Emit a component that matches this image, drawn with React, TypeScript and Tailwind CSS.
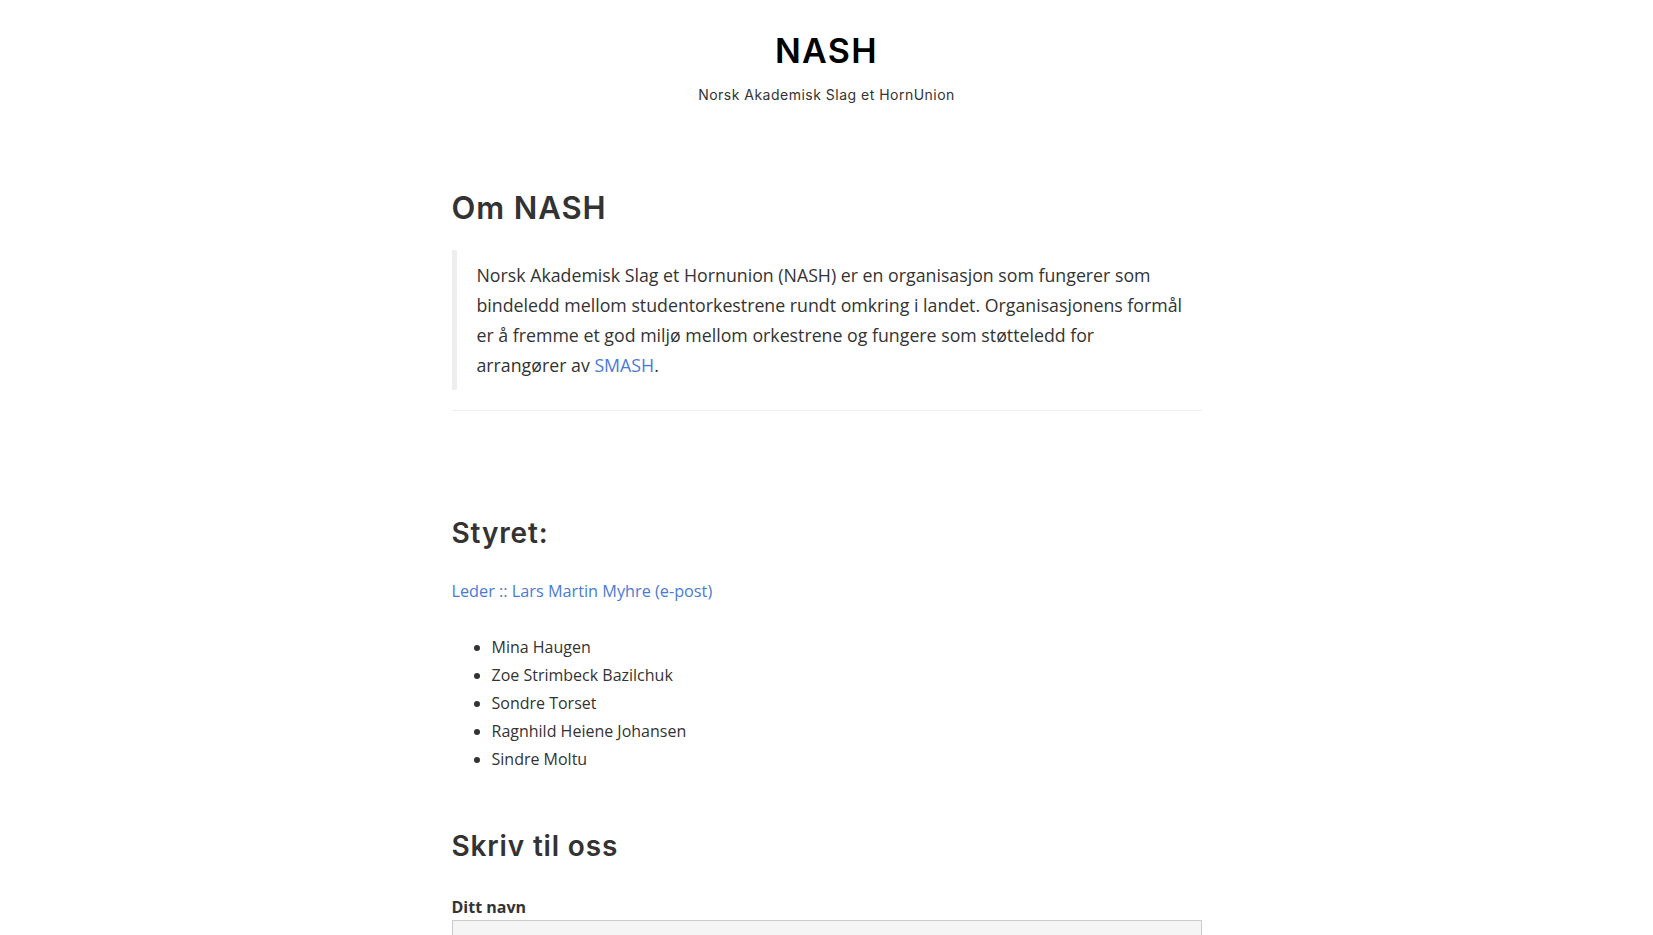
const heading = { fontFamily: 'Inter, "DejaVu Sans", sans-serif' };

const members = [
  'Mina Haugen',
  'Zoe Strimbeck Bazilchuk',
  'Sondre Torset',
  'Ragnhild Heiene Johansen',
  'Sindre Moltu',
];

export default function App() {
  return (
    <div
      className="min-h-[935px] bg-white text-[#333]"
      style={{ fontFamily: '"Open Sans", "Noto Sans", sans-serif' }}
    >
      {/* Header */}
      <header className="pt-[31px] text-center">
        <h1 className="text-[34px] leading-[40px] font-semibold tracking-[0.04em] text-black" style={heading}>
          NASH
        </h1>
        <p className="mt-[14px] text-[14px] leading-[20px] tracking-[0.035em] text-[#333]" style={heading}>
          Norsk Akademisk Slag et HornUnion
        </p>
      </header>

      <main className="mx-auto w-[750px] pt-[83px]">
        {/* Om NASH */}
        <h2 className="text-[31px] leading-[40px] font-semibold tracking-[0.03em]" style={heading}>
          Om NASH
        </h2>
        <blockquote className="mt-[22px] border-l-[5px] border-[#eee] py-[10px] pl-[20px] pr-[18px] text-[17.75px] leading-[30px]">
          Norsk Akademisk Slag et Hornunion (NASH) er en organisasjon som fungerer som
          bindeledd mellom studentorkestrene rundt omkring i landet. Organisasjonens formål
          er å fremme et god miljø mellom orkestrene og fungere som støtteledd for arrangører
          av <a className="text-[#4a7bd4]">SMASH</a>.
        </blockquote>
        <hr className="mt-[20px] border-t border-[#eee]" />

        {/* Styret */}
        <h3 className="mt-[104px] text-[28px] leading-[36px] font-semibold tracking-[0.03em]" style={heading}>
          Styret:
        </h3>
        <p className="mt-[26px] text-[16.25px] leading-[28px]">
          <a className="text-[#4a7bd4]">Leder :: Lars Martin Myhre (e-post)</a>
        </p>
        <ul className="mt-[28px] list-disc pl-[40px] text-[16px] leading-[28px]">
          {members.map((m) => (
            <li key={m}>{m}</li>
          ))}
        </ul>

        {/* Skriv til oss */}
        <h3 className="mt-[55px] text-[28px] leading-[36px] font-semibold tracking-[0.03em]" style={heading}>
          Skriv til oss
        </h3>
        <label className="mt-[31px] block text-[16px] leading-[24px] font-bold">Ditt navn</label>
        <input
          type="text"
          className="mt-[1px] block h-[40px] w-full border border-[#ccc] bg-[#f5f5f5]"
        />
      </main>
    </div>
  );
}
